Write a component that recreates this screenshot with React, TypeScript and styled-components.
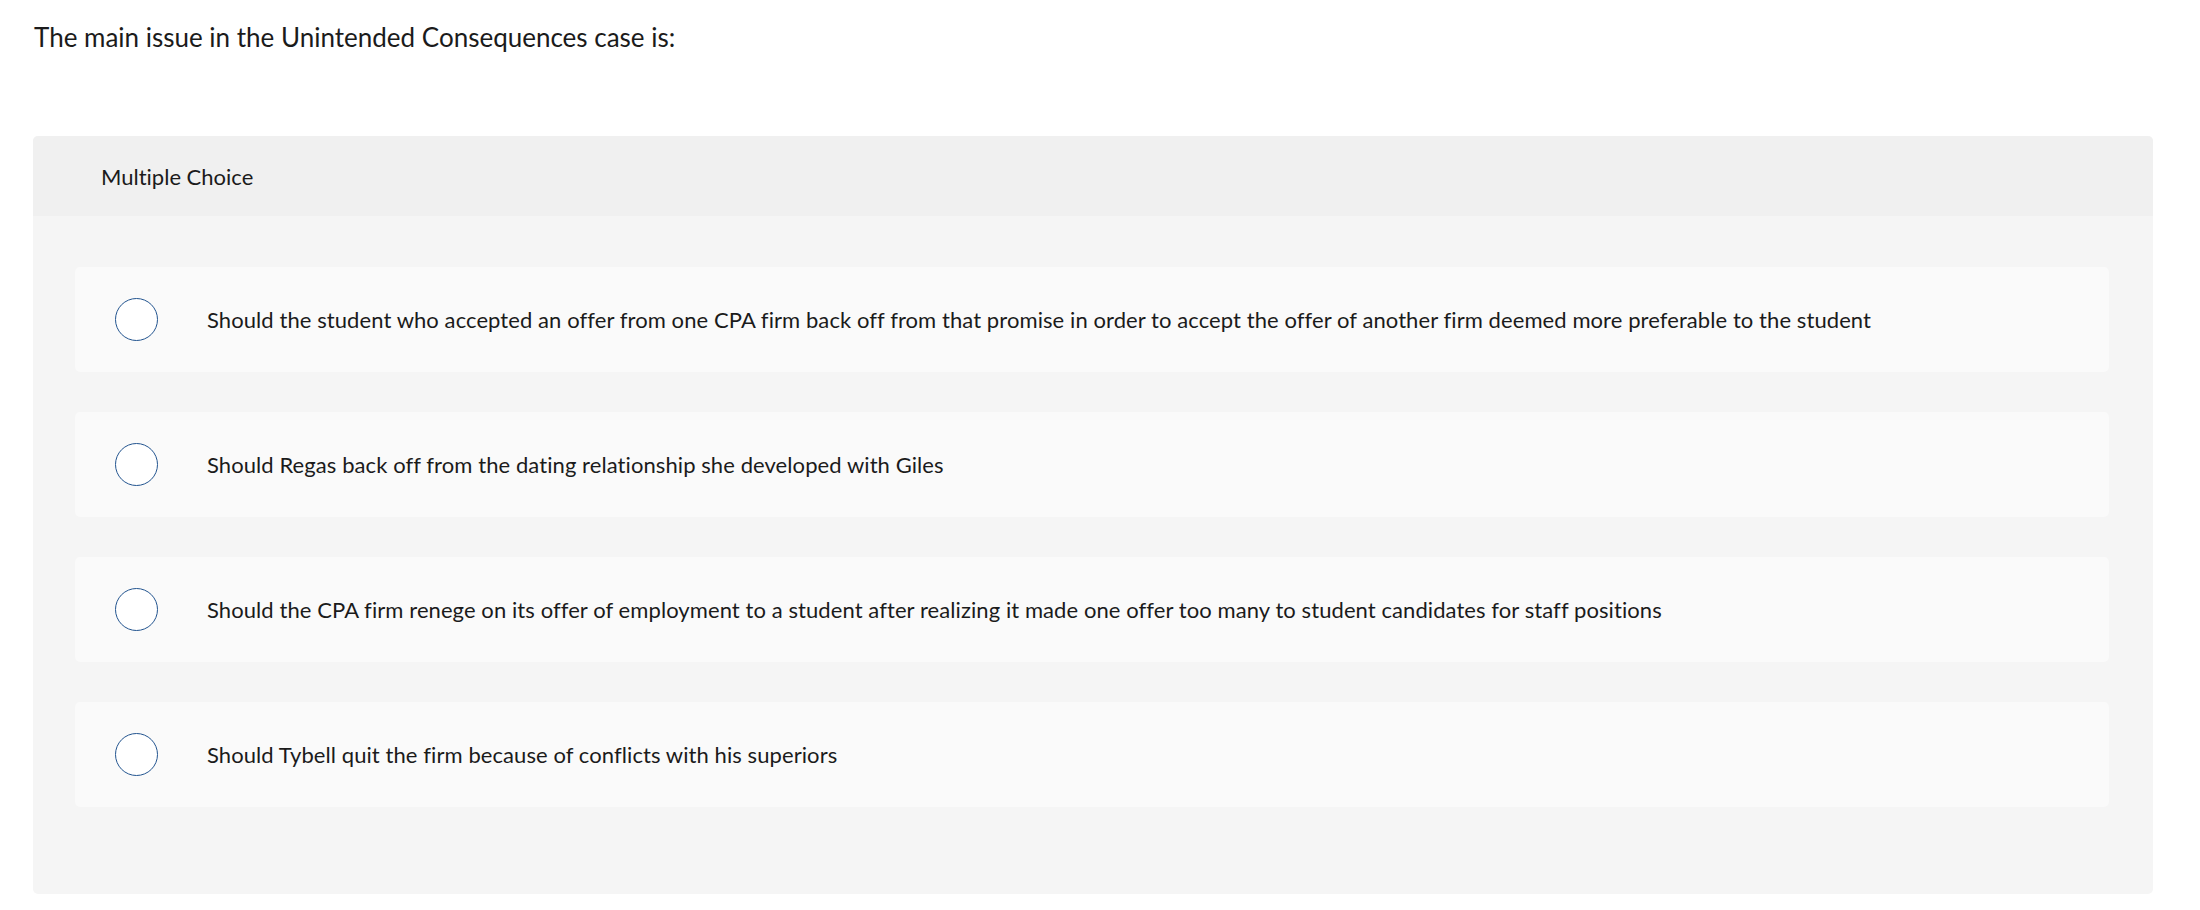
import React from "react";
import styled, { createGlobalStyle } from "styled-components";

const GlobalStyle = createGlobalStyle`
  html, body { margin: 0; padding: 0; background: #ffffff; }
  body {
    font-family: Lato, "Open Sans", sans-serif;
    color: #1d1d1f;
    font-variant-ligatures: none;
  }
`;

const Page = styled.div`
  padding: 22px 47px 0 33px;
  display: flex;
  flex-direction: column;
`;

const Prompt = styled.p`
  margin: 0 0 0 1px;
  font-size: 26px;
  line-height: 30px;
  color: #1b1b1b;
`;

const Card = styled.section`
  margin-top: 84px;
  background: #f5f5f5;
  border-radius: 5px;
  overflow: hidden;
  display: flex;
  flex-direction: column;
`;

const CardHeader = styled.div`
  height: 80px;
  background: #f0f0f0;
  display: flex;
  align-items: center;
  padding-left: 68px;
  font-size: 22px;
  color: #1b1b1b;
`;

const Options = styled.div`
  display: flex;
  flex-direction: column;
  gap: 40px;
  padding: 51px 44px 87px 42px;
`;

const Option = styled.label`
  height: 105px;
  background: #fafafa;
  border-radius: 5px;
  display: flex;
  align-items: center;
  padding-left: 40px;
  cursor: pointer;
`;

const Radio = styled.span`
  width: 41px;
  height: 41px;
  flex: none;
  border-radius: 50%;
  border: 1.5px solid #22548f;
  background: #ffffff;
`;

const OptionText = styled.span`
  margin-left: 49px;
  font-size: 22px;
  letter-spacing: 0.08px;
  color: #1b1b1b;
`;

const choices = [
  "Should the student who accepted an offer from one CPA firm back off from that promise in order to accept the offer of another firm deemed more preferable to the student",
  "Should Regas back off from the dating relationship she developed with Giles",
  "Should the CPA firm renege on its offer of employment to a student after realizing it made one offer too many to student candidates for staff positions",
  "Should Tybell quit the firm because of conflicts with his superiors",
];

export default function App() {
  return (
    <>
      <GlobalStyle />
      <Page>
        <Prompt>The main issue in the Unintended Consequences case is:</Prompt>
        <Card>
          <CardHeader>Multiple Choice</CardHeader>
          <Options>
            {choices.map((c) => (
              <Option key={c}>
                <Radio />
                <OptionText>{c}</OptionText>
              </Option>
            ))}
          </Options>
        </Card>
      </Page>
    </>
  );
}
